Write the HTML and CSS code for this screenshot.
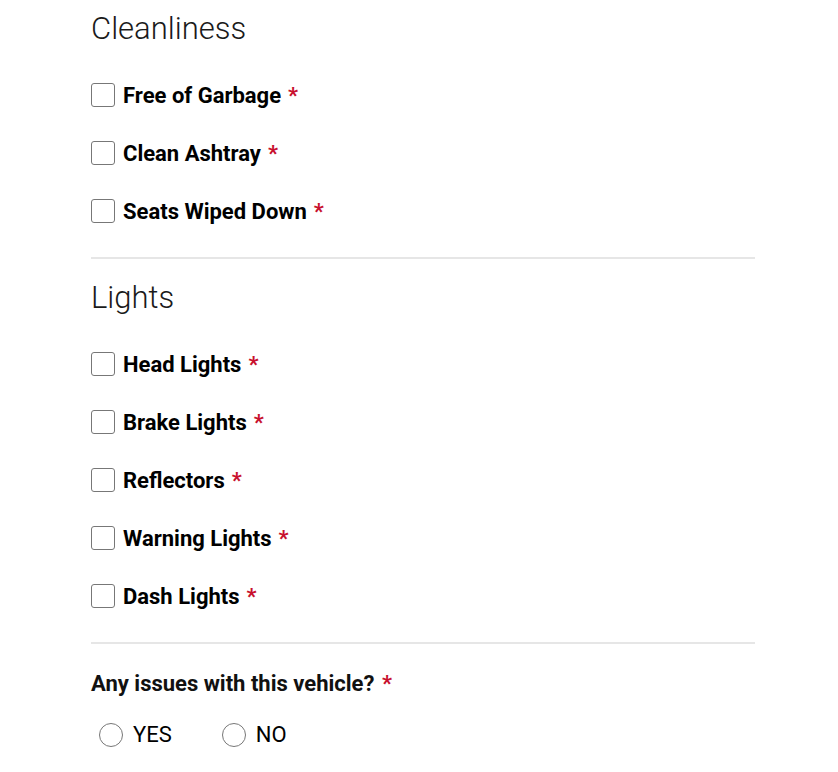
FILE: index.html
```html
<!DOCTYPE html>
<html>
<head>
<meta charset="utf-8">
<link rel="stylesheet" href="styles.css">
</head>
<body>
<div class="form">
  <section class="group">
    <h2 class="group-title">Cleanliness</h2>
    <label class="check"><span class="box"></span><span class="label">Free of Garbage</span><span class="req">*</span></label>
    <label class="check"><span class="box"></span><span class="label">Clean Ashtray</span><span class="req">*</span></label>
    <label class="check"><span class="box"></span><span class="label">Seats Wiped Down</span><span class="req">*</span></label>
  </section>
  <hr class="divider">
  <section class="group">
    <h2 class="group-title">Lights</h2>
    <label class="check"><span class="box"></span><span class="label">Head Lights</span><span class="req">*</span></label>
    <label class="check"><span class="box"></span><span class="label">Brake Lights</span><span class="req">*</span></label>
    <label class="check"><span class="box"></span><span class="label">Reflectors</span><span class="req">*</span></label>
    <label class="check"><span class="box"></span><span class="label">Warning Lights</span><span class="req">*</span></label>
    <label class="check"><span class="box"></span><span class="label">Dash Lights</span><span class="req">*</span></label>
  </section>
  <hr class="divider">
  <section class="question">
    <div class="q-title">Any issues with this vehicle? <span class="req">*</span></div>
    <div class="radios">
      <label class="radio"><span class="circle"></span><span>YES</span></label>
      <label class="radio"><span class="circle"></span><span>NO</span></label>
    </div>
  </section>
</div>
</body>
</html>
```
FILE: styles.css
```css
html, body {
  margin: 0;
  padding: 0;
  background: #fff;
}
body {
  font-family: Roboto, "Liberation Sans", sans-serif;
  color: #000;
}
.form {
  width: 664px;
  margin-left: 91px;
  padding-top: 11px;
}
.group-title {
  margin: 0 0 36px 0;
  font-weight: 300;
  font-size: 31px;
  line-height: 36px;
  color: #1a1a1a;
}
.check {
  display: flex;
  align-items: center;
  height: 24px;
  margin-bottom: 34px;
}
.box {
  width: 22px;
  height: 22px;
  border: 1.5px solid #777;
  border-radius: 3px;
  margin-right: 8px;
  flex: none;
}
.label {
  font-weight: 700;
  font-size: 22px;
  color: #000;
}
.req {
  color: #c8102e;
  font-weight: 700;
  font-size: 22px;
  margin-left: 7px;
}
.divider {
  border: 0;
  border-top: 2px solid #e6e6e6;
  margin: 0 0 21px 0;
}
.question {
  padding-top: 6px;
}
.q-title {
  font-weight: 700;
  font-size: 22px;
  line-height: 26px;
  color: #111;
}
.q-title .req {
  margin-left: 2px;
}
.radios {
  display: flex;
  gap: 50px;
  margin-top: 25px;
  padding-left: 8px;
}
.radio {
  display: flex;
  align-items: center;
  font-size: 22px;
  color: #000;
}
.circle {
  width: 22px;
  height: 22px;
  border: 1.5px solid #777;
  border-radius: 50%;
  margin-right: 10px;
}
```
